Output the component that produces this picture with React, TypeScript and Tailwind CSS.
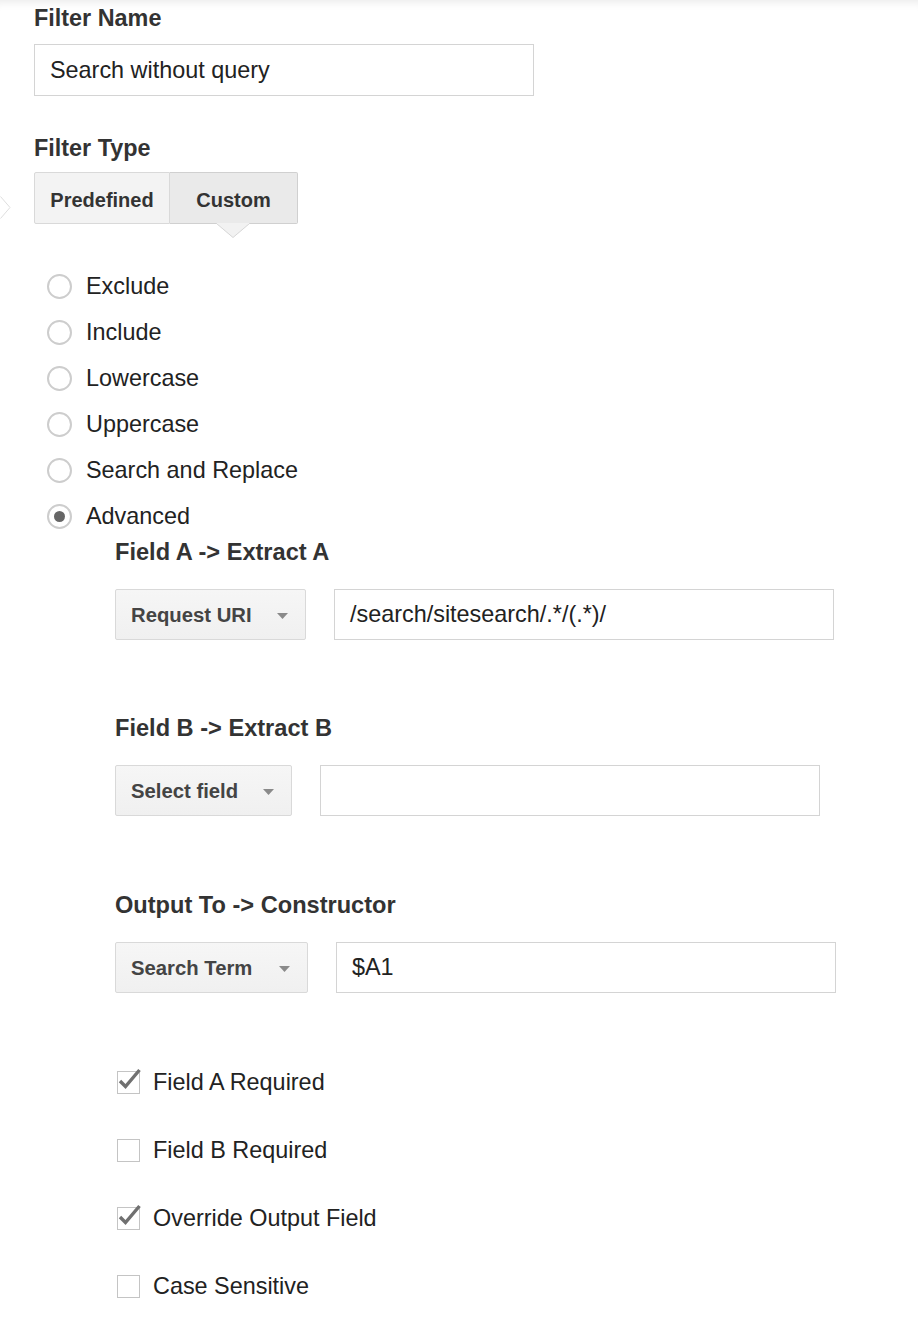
type RadioOption = { label: string; checked?: boolean }

const radioOptions: RadioOption[] = [
  { label: 'Exclude' },
  { label: 'Include' },
  { label: 'Lowercase' },
  { label: 'Uppercase' },
  { label: 'Search and Replace' },
  { label: 'Advanced', checked: true },
]

const checkOptions = [
  { label: 'Field A Required', checked: true },
  { label: 'Field B Required', checked: false },
  { label: 'Override Output Field', checked: true },
  { label: 'Case Sensitive', checked: false },
]

function Caret() {
  return (
    <svg width="11" height="6" viewBox="0 0 11 6" className="mt-[3px] shrink-0">
      <path d="M0 0 L11 0 L5.5 6 Z" fill="#8a8a8a" />
    </svg>
  )
}

function SelectButton({ label, width }: { label: string; width: string }) {
  return (
    <div
      className={`flex h-full items-center justify-between rounded-[2px] border border-[#d9d9d9] bg-gradient-to-b from-[#f6f6f6] to-[#f0f0f0] pl-[15px] pr-[17px] text-[20.3px] font-bold text-[#444] ${width}`}
    >
      <span className="pt-[1px]">{label}</span>
      <Caret />
    </div>
  )
}

function FieldRow({
  title,
  select,
  selectWidth,
  value,
  className,
}: {
  title: string
  select: string
  selectWidth: string
  value: string
  className: string
}) {
  return (
    <div className={className}>
      <div className="h-[28px] text-[23.6px] font-bold leading-[28px] text-[#333]">{title}</div>
      <div className="mt-[23px] flex h-[51px] gap-[28px]">
        <SelectButton label={select} width={selectWidth} />
        <div className="flex w-[500px] items-center border border-[#d4d4d4] bg-white px-[15px] pt-[1px] text-[23.4px] text-[#222]">
          {value}
        </div>
      </div>
    </div>
  )
}

export default function App() {
  return (
    <div className="relative min-h-[1324px] bg-white pt-[4px] pl-[34px] font-['Liberation_Sans',Arial,Helvetica,sans-serif] text-[#222] shadow-[inset_0_10px_10px_-8px_rgba(0,0,0,0.09)]">
      {/* panel pointer on the left edge */}
      <svg width="12" height="24" viewBox="0 0 12 24" className="absolute left-0 top-[196px]">
        <polyline points="0.5,0.5 10,11.5 0.5,22.5" fill="white" stroke="#dedede" strokeWidth="1" />
      </svg>

      <div className="h-[28px] text-[23.4px] font-bold leading-[28px] text-[#333]">Filter Name</div>
      <div className="mt-[12px] flex h-[52px] w-[500px] items-center border border-[#d4d4d4] bg-white px-[15px] pt-[1px] text-[23.4px] text-[#222]">
        Search without query
      </div>

      <div className="mt-[38px] h-[28px] text-[23.4px] font-bold leading-[28px] text-[#333]">Filter Type</div>
      <div className="mt-[10px] flex h-[52px] w-fit text-[20px] font-bold text-[#333]">
        <div className="flex w-[136px] items-center justify-center rounded-l-[2px] border border-[#d9d9d9] bg-[#f3f3f3] pt-[4px]">
          Predefined
        </div>
        <div className="relative flex w-[128px] items-center justify-center rounded-r-[2px] border border-l-0 border-[#d0d0d0] bg-[#eaeaea] pt-[4px]">
          Custom
          <svg width="34" height="16" viewBox="0 0 34 16" className="absolute left-[46px] top-[50px]">
            <path d="M0.5 0.5 L17 14.5 L33.5 0.5" fill="#f2f2f2" stroke="#d6d6d6" strokeWidth="1" />
            <rect x="1" y="0" width="32" height="1" fill="#f2f2f2" />
          </svg>
        </div>
      </div>

      <div className="mt-[39px] flex flex-col">
        {radioOptions.map((opt) => (
          <div key={opt.label} className="flex h-[46px] items-center">
            <div className="ml-[13px] flex h-[25px] w-[25px] items-center justify-center rounded-full border-2 border-[#cdcdcd] bg-white">
              {opt.checked && <div className="h-[11px] w-[11px] rounded-full bg-[#666]" />}
            </div>
            <span className="ml-[14px] pt-[2px] text-[23.4px] text-[#222]">{opt.label}</span>
          </div>
        ))}
      </div>

      <div className="ml-[81px]">
        <FieldRow
          className="-mt-[1px]"
          title="Field A -> Extract A"
          select="Request URI"
          selectWidth="w-[191px]"
          value="/search/sitesearch/.*/(.*)/"
        />
        <FieldRow
          className="mt-[74px]"
          title="Field B -> Extract B"
          select="Select field"
          selectWidth="w-[177px]"
          value=""
        />
        <FieldRow
          className="mt-[75px]"
          title="Output To -> Constructor"
          select="Search Term"
          selectWidth="w-[193px]"
          value="$A1"
        />

        <div className="mt-[55px] flex flex-col">
          {checkOptions.map((opt) => (
            <div key={opt.label} className="flex h-[68px] items-center">
              <div className="relative ml-[2px] h-[23px] w-[23px] border-[1.5px] border-[#c4c4c4] bg-white">
                {opt.checked && (
                  <svg
                    width="26"
                    height="24"
                    viewBox="0 0 26 24"
                    className="absolute -left-[2px] -top-[5px] overflow-visible"
                  >
                    <path
                      d="M4 14 L9.5 19.5 L23.5 3"
                      fill="none"
                      stroke="#707070"
                      strokeWidth="3.4"
                      strokeLinecap="butt"
                      strokeLinejoin="miter"
                    />
                  </svg>
                )}
              </div>
              <span className="ml-[13px] pt-[2px] text-[23.4px] text-[#222]">{opt.label}</span>
            </div>
          ))}
        </div>
      </div>
    </div>
  )
}
